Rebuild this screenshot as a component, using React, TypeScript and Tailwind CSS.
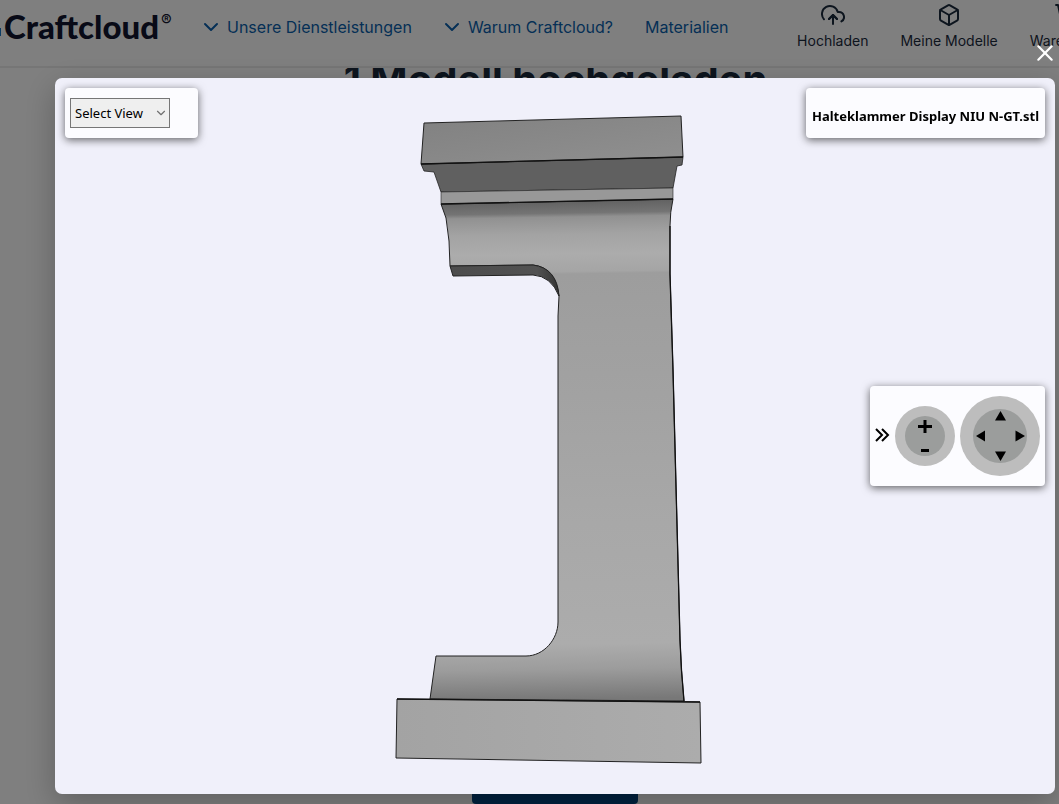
import React, { useState } from 'react';
import { Box, ChevronDown, ShoppingCart, X } from 'lucide-react';
import { FiUploadCloud } from 'react-icons/fi';

const VIEWS = ['Select View', 'Front', 'Back', 'Left', 'Right', 'Top', 'Bottom'];

const PANEL = 'absolute rounded-[4px] bg-[#fcfcff] shadow-[0_2px_8px_rgba(0,0,0,0.6)]';

const NAV_LINK = "flex items-center gap-2 text-[#0a5fac] font-['Inter',sans-serif] text-base leading-6 whitespace-nowrap";

const Logo: React.FC = () => (
  <a href="#" className="flex shrink-0 items-start text-[#10142e]">
    <span className="mt-5 mr-[3px] h-2 w-px shrink-0 bg-[#1878c8]" />
    <span className="font-['Lato',sans-serif] text-[33px] font-black leading-9">Craftcloud</span>
    <span className="mt-1 ml-0.5 font-['Inter',sans-serif] text-base font-medium leading-4">®</span>
  </a>
);

const Header: React.FC = () => (
  <header className="relative z-10 flex h-[68px] items-start border-b-2 border-[#ececec] bg-white">
    <div className="w-[203px] shrink-0 pt-2">
      <Logo />
    </div>
    <nav className="flex shrink-0 gap-8 pt-[15px]">
      <a href="#" className={NAV_LINK}>
        <ChevronDown size={16} strokeWidth={2} viewBox="4 4 16 16" />
        Unsere Dienstleistungen
      </a>
      <a href="#" className={NAV_LINK}>
        <ChevronDown size={16} strokeWidth={2} viewBox="4 4 16 16" />
        Warum Craftcloud?
      </a>
      <a href="#" className={NAV_LINK}>Materialien</a>
    </nav>
    <div className="ml-auto -mr-[43px] flex shrink-0 gap-8 pt-[3px] font-['Inter',sans-serif] text-sm leading-5 text-[#1b2a3d]">
      <a href="#" className="flex flex-col items-center gap-1">
        <FiUploadCloud size={24} />
        Hochladen
      </a>
      <a href="#" className="flex flex-col items-center gap-1">
        <Box size={24} strokeWidth={2} />
        Meine Modelle
      </a>
      <a href="#" className="flex flex-col items-center gap-1">
        <ShoppingCart size={24} strokeWidth={2} />
        Warenkorb
      </a>
    </div>
  </header>
);

// the loaded part, seen from the front
const Model: React.FC = () => (
  <svg viewBox="55 78 1000 716" className="block h-full w-full" role="img" aria-label="Halteklammer">
    <defs>
      <linearGradient id="body" gradientUnits="userSpaceOnUse" x1="441" y1="201" x2="449" y2="701">
        <stop offset="0" stopColor="#5f5f5f" />
        <stop offset="0.028" stopColor="#747474" />
        <stop offset="0.036" stopColor="#919191" />
        <stop offset="0.07" stopColor="#a3a3a3" />
        <stop offset="0.11" stopColor="#acacac" />
        <stop offset="0.145" stopColor="#a5a5a5" />
        <stop offset="0.15" stopColor="#9d9d9d" />
        <stop offset="0.35" stopColor="#a1a1a1" />
        <stop offset="0.65" stopColor="#a8a8a8" />
        <stop offset="0.89" stopColor="#acacac" />
        <stop offset="0.94" stopColor="#9c9c9c" />
        <stop offset="1" stopColor="#787878" />
      </linearGradient>
      <linearGradient id="cap" x1="0" y1="0" x2="1" y2="1">
        <stop offset="0" stopColor="#818181" />
        <stop offset="1" stopColor="#909090" />
      </linearGradient>
      <linearGradient id="foot" x1="0" y1="0" x2="1" y2="0">
        <stop offset="0" stopColor="#a3a3a3" />
        <stop offset="1" stopColor="#acacac" />
      </linearGradient>
      <linearGradient id="notch" x1="0" y1="0" x2="1" y2="0">
        <stop offset="0" stopColor="#4c4c4c" />
        <stop offset="0.8" stopColor="#525252" />
        <stop offset="1" stopColor="#333333" />
      </linearGradient>
    </defs>
    <g stroke="#222222" strokeLinejoin="round">
      <path
        d="M441 204 L673 199 Q670 212 670 226 L670 274 L673 370 L680 640 Q681 670 684 701 L430 699 L436 656 L526 656 C544 656 558 639 558 622 L558 316 L559 296 Q555 267 533 265 L450 266 Q450 240 446 218 Z"
        fill="url(#body)"
      />
      <path d="M450 266 L533 265 Q557 268 559 296 Q551 276 533 275 L453 276 Z" fill="url(#notch)" />
      <path d="M421 164 L683 157 L682 165 L677 166 L673 188 L441 192 L434 172 L424 171 Z" fill="#606060" strokeWidth="0.8" />
      <path d="M441 192 L673 188 L673 199 L441 204 Z" fill="#989898" strokeWidth="0.6" />
      <path d="M424 123 L681 116 L683 157 L421 164 Z" fill="url(#cap)" />
      <path d="M397 699 L700 702 L701 763 L396 758 Z" fill="url(#foot)" />
    </g>
    <g fill="none" stroke="#111111" strokeWidth="1.3">
      <path d="M421 164 L683 157" />
      <path d="M441 204 L673 199" />
      <path d="M670 226 L670 274 L673 370 L680 640 Q681 670 684 701" />
      <path d="M397 699 L700 702" />
    </g>
  </svg>
);

const ControlPanel: React.FC = () => (
  <div className={`${PANEL} right-[10px] top-[308px] flex h-[100px] items-center gap-[5px] p-[5px]`}>
    <button type="button" aria-label="Collapse controls" className="w-[15px]">
      <svg width="15" height="16" viewBox="0 0 15 16" className="block">
        <path d="M1 1l6 6-6 6M7 1l6 6-6 6" fill="none" stroke="#000" strokeWidth="2" />
      </svg>
    </button>
    <div className="flex size-[60px] items-center justify-center rounded-full bg-[#bdbdbd]">
      <div className="flex size-10 flex-col items-center justify-between rounded-full bg-[#9b9d9c] pt-1 pb-1">
        <button type="button" aria-label="Zoom in">
          <svg width="14" height="13" viewBox="0 0 14 13" className="block">
            <path d="M7 0v13M0 6.5h14" stroke="#000" strokeWidth="3" />
          </svg>
        </button>
        <button type="button" aria-label="Zoom out">
          <svg width="8" height="3" viewBox="0 0 8 3" className="block">
            <path d="M0 1.5h8" stroke="#000" strokeWidth="3" />
          </svg>
        </button>
      </div>
    </div>
    <div className="flex size-20 items-center justify-center rounded-full bg-[#bdbdbd]">
      <div className="flex size-[54px] items-center justify-center rounded-full bg-[#9b9d9c]">
        <div className="grid size-[50px] grid-cols-[10px_1fr_10px] grid-rows-[10px_1fr_10px] place-items-center">
          <button type="button" aria-label="Up" className="col-start-2 row-start-1">
            <svg width="12" height="10" viewBox="0 0 12 10" className="block"><path d="M6.500 0l5.500 9.500H1z" /></svg>
          </button>
          <button type="button" aria-label="Left" className="col-start-1 row-start-2">
            <svg width="10" height="12" viewBox="0 0 10 12" className="block"><path d="M1 6l9-5.500v11z" /></svg>
          </button>
          <button type="button" aria-label="Right" className="col-start-3 row-start-2">
            <svg width="10" height="12" viewBox="0 0 10 12" className="block"><path d="M10 6L0.500 0.500v11z" /></svg>
          </button>
          <button type="button" aria-label="Down" className="col-start-2 row-start-3">
            <svg width="12" height="10" viewBox="0 0 12 10" className="block"><path d="M6.500 10L1 0.500h11z" /></svg>
          </button>
        </div>
      </div>
    </div>
  </div>
);

const Viewer: React.FC<{ onClose: () => void }> = ({ onClose }) => {
  const [view, setView] = useState(VIEWS[0]);

  return (
    <div className="fixed inset-0 z-20 flex bg-black/50 pt-[78px] pr-1 pb-[10px] pl-[55px]">
      <div
        role="dialog"
        aria-label="3D viewer"
        className="relative min-w-0 flex-1 rounded-[7px] bg-[#f0f0fa] shadow-[0_10px_32px_rgba(0,0,0,0.25)]"
      >
        <Model />

        <div className={`${PANEL} left-[10px] top-[10px] flex h-[50px] w-[133px] items-center px-[5px]`}>
          <div className="relative">
            <select
              aria-label="Select View"
              value={view}
              onChange={(e) => setView(e.target.value)}
              className="block h-[30px] w-[100px] appearance-none border border-[#767676] bg-[#efefef] pt-0.5 pl-1 font-['Noto_Sans',sans-serif] text-[13px] text-black"
            >
              {VIEWS.map((v) => (
                <option key={v}>{v}</option>
              ))}
            </select>
            <ChevronDown size={14} strokeWidth={2} className="pointer-events-none absolute top-2 right-0.5 text-[#707070]" />
          </div>
        </div>

        <div className={`${PANEL} right-[10px] top-[10px] flex h-[50px] w-[239px] items-center justify-center pt-[5px]`}>
          <h2 className="font-['Noto_Sans',sans-serif] text-[13px] font-bold leading-5 whitespace-nowrap text-black">
            Halteklammer Display NIU N-GT.stl
          </h2>
        </div>

        <ControlPanel />

        <button type="button" aria-label="Close" onClick={onClose} className="absolute -top-[35px] right-0 text-white">
          <X size={20} strokeWidth={2} viewBox="3 3 18 18" />
        </button>
      </div>
    </div>
  );
};

const App: React.FC = () => {
  const [open, setOpen] = useState(true);

  return (
    <div className="flex h-screen flex-col overflow-hidden bg-white">
      <Header />
      <main className="flex flex-1 flex-col items-center justify-between">
        <h1 className="-mt-3 ml-[52px] font-['Inter',sans-serif] text-[40px] font-bold leading-[48px] text-[#1b2a3d]">
          1 Modell hochgeladen
        </h1>
        <button
          type="button"
          onClick={() => setOpen(true)}
          className="ml-[51px] h-12 w-[166px] rounded-[4px] bg-[#00427e] font-['Inter',sans-serif] text-white"
        >
          Weiter
        </button>
      </main>
      {open && <Viewer onClose={() => setOpen(false)} />}
    </div>
  );
};

export default App;
